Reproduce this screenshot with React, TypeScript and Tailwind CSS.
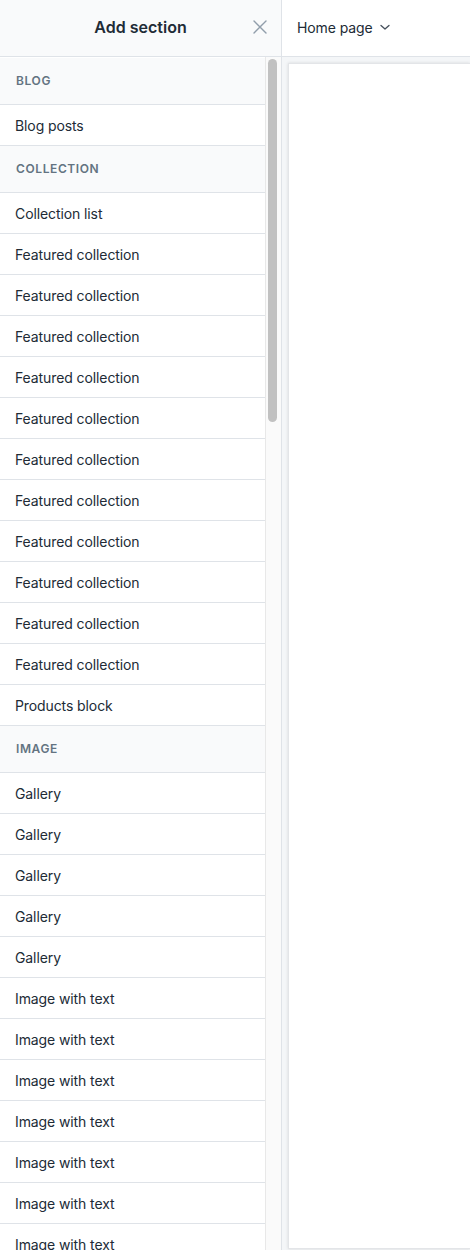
const SECTIONS = [
  { title: "Blog", items: ["Blog posts"] },
  {
    title: "Collection",
    items: ["Collection list", ...Array(11).fill("Featured collection"), "Products block"],
  },
  {
    title: "Image",
    items: [...Array(5).fill("Gallery"), ...Array(7).fill("Image with text")],
  },
];

function CloseIcon() {
  return (
    <svg width="16" height="16" viewBox="0 0 16 16" fill="none" aria-hidden="true">
      <path d="M2 2l12 12M14 2L2 14" stroke="#919eab" strokeWidth="1.4" strokeLinecap="round" />
    </svg>
  );
}

function ChevronDown() {
  return (
    <svg width="12" height="12" viewBox="0 0 12 12" fill="none" aria-hidden="true">
      <path d="M2 4.5l4 3.5 4-3.5" stroke="#454f5b" strokeWidth="1.3" strokeLinecap="round" strokeLinejoin="round" />
    </svg>
  );
}

export default function App() {
  return (
    <div
      className="flex h-[1250px] w-[470px] overflow-hidden bg-white text-[#212b36]"
      style={{ fontFamily: "Inter, 'Noto Sans', sans-serif" }}
    >
      {/* Left: add section panel */}
      <aside className="flex w-[282px] shrink-0 flex-col border-r border-[#dfe3e8]">
        <div className="relative flex h-[57px] shrink-0 items-center justify-center border-b border-[#dfe3e8] bg-[#f9fafb] pb-[2px]">
          <h1 className="text-[16px] font-semibold">Add section</h1>
          <button type="button" aria-label="Close" className="absolute right-[13px] top-[19px]">
            <CloseIcon />
          </button>
        </div>

        <div className="flex min-h-0 flex-1">
          <div className="min-w-0 flex-1 overflow-hidden pt-[1px]">
            {SECTIONS.map((section) => (
              <div key={section.title}>
                <div className="flex h-[47px] items-center border-b border-[#dfe3e8] bg-[#f9fafb] pl-[16px] text-[12px] font-semibold uppercase tracking-[0.05em] text-[#637381]">
                  {section.title}
                </div>
                {section.items.map((item, i) => (
                  <div
                    key={i}
                    className="flex h-[41px] items-center border-b border-[#dfe3e8] pl-[15px] text-[14px] tracking-[-0.1px]"
                  >
                    {item}
                  </div>
                ))}
              </div>
            ))}
          </div>
          {/* scrollbar */}
          <div className="w-[16px] shrink-0 border-l border-[#e8e8e8] bg-[#fafafa] pl-[2px] pt-[2px]">
            <div className="h-[363px] w-[9px] rounded-full bg-[#c1c1c1]" />
          </div>
        </div>
      </aside>

      {/* Right: preview */}
      <main className="flex min-w-0 flex-1 flex-col">
        <div className="flex h-[57px] shrink-0 items-center gap-[6px] border-b border-[#dfe3e8] pb-[2px] pl-[15px] text-[14px] tracking-[-0.1px] text-[#212b36]">
          <span>Home page</span>
          <ChevronDown />
        </div>
        <div className="flex-1 bg-[#f4f6f8] pb-[1px] pl-[6px] pt-[6px]">
          <div className="h-full w-full border-b border-l border-t border-[#e3e5e8] bg-white shadow-[0_0_3px_rgba(0,0,0,0.12)]" />
        </div>
      </main>
    </div>
  );
}
